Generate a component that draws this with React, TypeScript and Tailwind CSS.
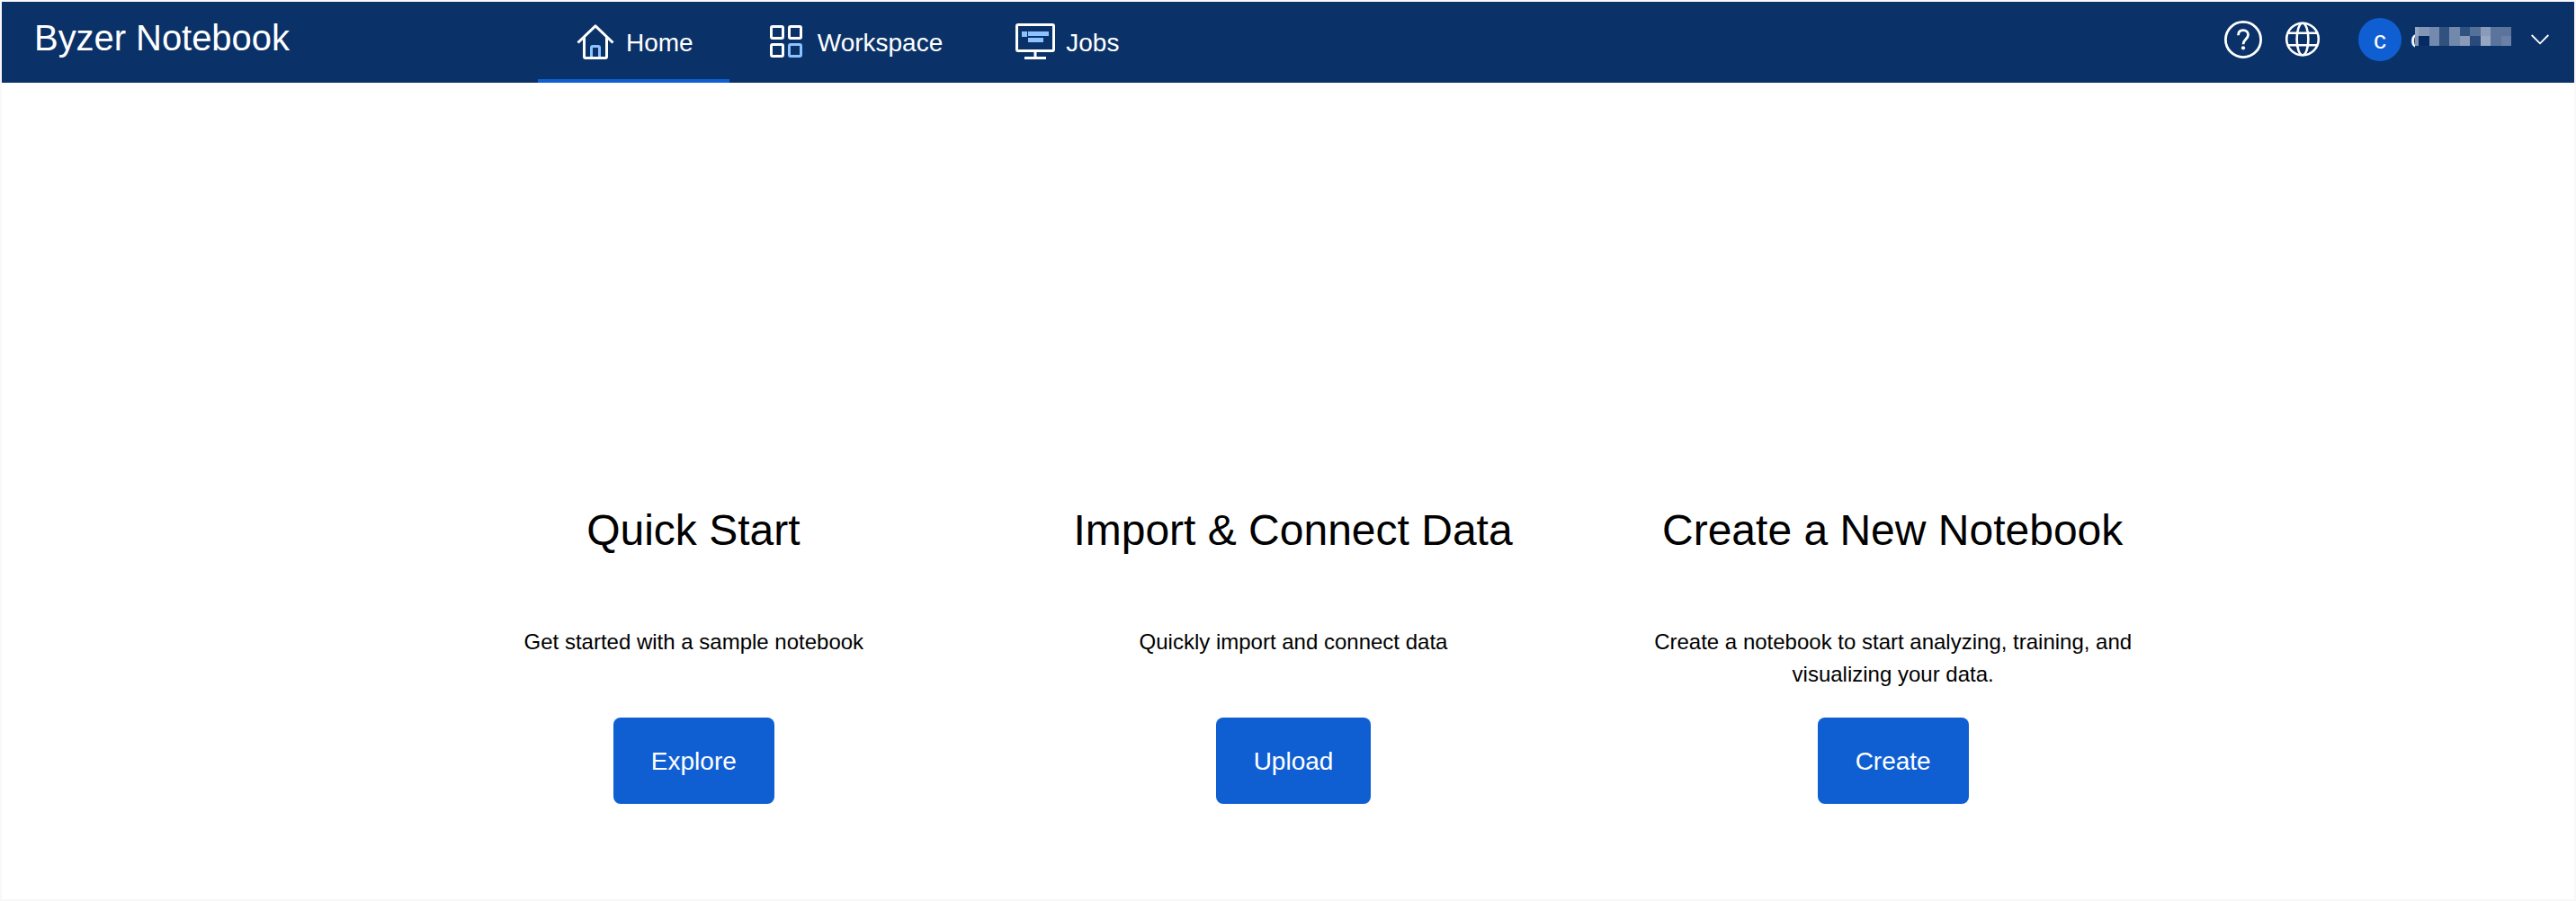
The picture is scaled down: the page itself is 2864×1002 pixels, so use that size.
import React from "react";

const HomeIcon = () => (
  <svg width="48" height="48" viewBox="0 0 48 48" fill="none" stroke="white" strokeWidth="3">
    <path d="M19.5 42V31a1.5 1.5 0 0 1 1.5 -1.5h6a1.5 1.5 0 0 1 1.5 1.5v11" stroke="#8cc2ff" />
    <path d="M4.5 25.5L24 6.8L43.5 25.5" strokeLinejoin="round" />
    <path d="M11.5 19V41a1.5 1.5 0 0 0 1.5 1.5h22a1.5 1.5 0 0 0 1.5 -1.5V19" />
  </svg>
);

const WorkspaceIcon = () => (
  <svg width="48" height="48" viewBox="0 0 48 48" fill="none" stroke="white" strokeWidth="3">
    <rect x="6.5" y="7.5" width="13" height="13" rx="1.5" />
    <rect x="26.5" y="7.5" width="13" height="13" rx="1.5" />
    <rect x="6.5" y="27.5" width="13" height="13" rx="1.5" />
    <rect x="26.5" y="27.5" width="13" height="13" rx="1.5" stroke="#8cc2ff" />
  </svg>
);

const JobsIcon = () => (
  <svg width="48" height="48" viewBox="0 0 48 48" fill="none">
    <rect x="3.5" y="5.5" width="41" height="29" rx="1.5" stroke="white" strokeWidth="3" />
    <path d="M24 36v5" stroke="white" strokeWidth="3" />
    <path d="M12 42.5h24" stroke="white" strokeWidth="3" />
    <path d="M9 13h6v6h-6zM16 13h23v5h-23zM16 20h17v5h-17z" fill="#8cc2ff" />
  </svg>
);

const HelpIcon = () => (
  <svg width="42" height="42" viewBox="0 0 42 42" fill="none" stroke="white">
    <circle cx="21" cy="21" r="19.6" strokeWidth="2.8" />
    <path d="M15.5 16.3c0-3.6 2.2-5.7 5.5-5.7s5.5 2.1 5.5 5.1c0 4.4-5.5 5.2-5.5 10.5" strokeWidth="2.8" />
    <circle cx="21" cy="30.3" r="2.1" fill="white" stroke="none" />
  </svg>
);

const GlobeIcon = () => (
  <svg width="40" height="40" viewBox="0 0 40 40" fill="none" stroke="white" strokeWidth="2.6">
    <circle cx="20" cy="19.5" r="17.8" />
    <ellipse cx="20" cy="19.5" rx="6.4" ry="17.8" />
    <path d="M4 12.7h32M4 26.2h32" />
  </svg>
);

const NAV = [
  { label: "Home", Icon: HomeIcon, active: true },
  { label: "Workspace", Icon: WorkspaceIcon, active: false },
  { label: "Jobs", Icon: JobsIcon, active: false },
];

const CARDS = [
  { title: "Quick Start", text: "Get started with a sample notebook", action: "Explore" },
  { title: "Import & Connect Data", text: "Quickly import and connect data", action: "Upload" },
  { title: "Create a New Notebook", text: "Create a notebook to start analyzing, training, and visualizing your data.", action: "Create" },
];

// Pixelated user name: two rows of colour blocks.
const MOSAIC = [
  ["#97a6c1", "#8296b6", "#7389ad", "#31517f", "#7289ac", "#31517f", "#546f98", "#8a9bb9", "#5b749c", "#5b749c"],
  ["#8296b6", "#052b62", "#7389ad", "#31517f", "#7289ac", "#8a9bb9", "#294a7b", "#97a6c1", "#5b749c", "#6a80a8"],
];

export default function App() {
  return (
    <div className="flex h-[1002px] w-[2864px] flex-col border-2 border-[#f8f8f8] bg-white font-['Liberation_Sans',Arial,sans-serif] text-black">
      <header className="flex h-[90px] shrink-0 bg-[#0b3268] text-white">
        <div className="w-[596px] pl-9 pt-[17px] text-[40px] leading-[46px] tracking-[-0.05px]">Byzer Notebook</div>
        <nav className="flex">
          {NAV.map(({ label, Icon, active }) => (
            <a
              key={label}
              className={
                active
                  ? "flex gap-[10px] border-b-4 border-[#0f5fd3] px-10 pt-5"
                  : "flex gap-[10px] px-10 pt-5 last:-ml-px"
              }
            >
              <Icon />
              <span className="pt-[10px] text-[28px] leading-8">{label}</span>
            </a>
          ))}
        </nav>
        <div className="ml-auto flex h-[84px] items-center pr-7">
          <HelpIcon />
          <div className="ml-[25px]">
            <GlobeIcon />
          </div>
          <div className="ml-[42px] flex size-12 items-center justify-center rounded-full bg-[#0f5fd3] pt-px text-[28px] leading-none">c</div>
          <div className="ml-[10px] flex items-start">
            <span className="w-[5px] overflow-hidden text-[28px] leading-8">c</span>
            <div className="mt-0.5 grid grid-cols-[4px_12px_11px_11px_12px_11px_12px_11px_12px_11px] grid-rows-[10px_11px]">
              {MOSAIC.flat().map((color, i) => (
                <span key={i} style={{ backgroundColor: color }} />
              ))}
            </div>
          </div>
          <svg className="ml-[22px]" width="20" height="12" viewBox="0 0 20 12" fill="none" stroke="white" strokeWidth="1.8">
            <path d="M0.7 1l9.3 9.3L19.3 1" />
          </svg>
        </div>
      </header>
      <main className="ml-[436px] grid w-[2000px] grid-cols-3 pt-[470px]">
        {CARDS.map((card) => (
          <section key={card.title} className="flex flex-col items-center text-center">
            <h2 className="pr-px text-[48px] leading-[56px]">{card.title}</h2>
            <p className="mt-[78px] h-[102px] w-[600px] text-[24px] leading-9">{card.text}</p>
            <button className="h-24 rounded-lg bg-[#0f5fd3] px-[42px] pt-0.5 text-[28px] text-white">{card.action}</button>
          </section>
        ))}
      </main>
    </div>
  );
}
